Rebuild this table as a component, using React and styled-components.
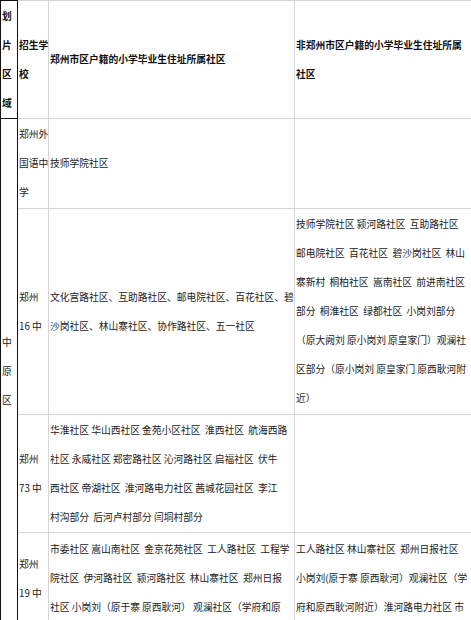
import styled, { createGlobalStyle } from 'styled-components';

const GlobalStyle = createGlobalStyle`
  html, body {
    margin: 0;
    padding: 0;
    background: #fff;
    overflow: hidden;
  }
  body {
    font-family: "Noto Sans CJK SC", "Noto Sans", sans-serif;
    color: #1a1a1a;
  }
`;

const Table = styled.table`
  border-collapse: collapse;
  table-layout: fixed;
  width: 471px;
  font-size: 9.75px;
  line-height: 29px;
`;

const Row = styled.tr`
  height: ${(props) => props.h}px;
`;

const Cell = styled.td`
  border: 1px solid #d6d6d6;
  padding: 0 0 0 1px;
  vertical-align: middle;
  overflow: hidden;
  font-weight: ${(props) => (props.head ? 700 : 400)};
  color: ${(props) => (props.head ? '#111' : '#222')};
`;

const AreaCell = styled(Cell)`
  border: 1px solid #111;
  padding-left: 1px;
`;

const Line = styled.div`
  white-space: pre;
`;

function Lines({ items }) {
  return items.map((t, i) => <Line key={i}>{t}</Line>);
}

const rows = [
  {
    h: 90,
    school: ['郑州外', '国语中', '学'],
    local: ['技师学院社区'],
    other: [],
  },
  {
    h: 206,
    school: ['郑州', '16 中'],
    local: [
      '文化宫路社区、互助路社区、邮电院社区、百花社区、碧',
      '沙岗社区、林山寨社区、协作路社区、五一社区',
    ],
    other: [
      '技师学院社区 颍河路社区  互助路社区',
      '邮电院社区  百花社区  碧沙岗社区  林山',
      '寨新村  桐柏社区  嵩南社区  前进南社区',
      '部分  桐淮社区  绿都社区  小岗刘部分',
      '（原大阙刘 原小岗刘 原皇家门）观澜社',
      '区部分（原小岗刘 原皇家门 原西耿河附',
      '近）',
    ],
  },
  {
    h: 118,
    school: ['郑州', '73 中'],
    local: [
      '华淮社区 华山西社区 金苑小区社区  淮西社区  航海西路',
      '社区 永威社区 郑密路社区 沁河路社区 启福社区  伏牛',
      '西社区 帝湖社区  淮河路电力社区 茜城花园社区  李江',
      '村沟部分  后河卢村部分 闫垌村部分',
    ],
    other: [],
  },
  {
    h: 92,
    school: ['郑州', '19 中'],
    local: [
      '市委社区 嵩山南社区  金京花苑社区  工人路社区  工程学',
      '院社区  伊河路社区  颍河路社区  林山寨社区  郑州日报',
      '社区 小岗刘（原于寨 原西耿河） 观澜社区（学府和原',
    ],
    other: [
      '工人路社区 林山寨社区  郑州日报社区',
      '小岗刘(原于寨 原西耿河）观澜社区（学',
      '府和原西耿河附近）淮河路电力社区 市',
    ],
  },
];

export default function App() {
  return (
    <>
      <GlobalStyle />
      <Table>
        <colgroup>
          <col style={{ width: 17 }} />
          <col style={{ width: 31 }} />
          <col style={{ width: 246 }} />
          <col style={{ width: 177 }} />
        </colgroup>
        <tbody>
          <Row h={118}>
            <AreaCell head>
              <Lines items={['划', '片', '区', '域']} />
            </AreaCell>
            <Cell head>
              <Lines items={['招生学', '校']} />
            </Cell>
            <Cell head>
              <Lines items={['郑州市区户籍的小学毕业生住址所属社区']} />
            </Cell>
            <Cell head>
              <Lines items={['非郑州市区户籍的小学毕业生住址所属', '社区']} />
            </Cell>
          </Row>
          {rows.map((r, i) => (
            <Row h={r.h} key={i}>
              {i === 0 && (
                <AreaCell rowSpan={rows.length}>
                  <Lines items={['中', '原', '区']} />
                </AreaCell>
              )}
              <Cell>
                <Lines items={r.school} />
              </Cell>
              <Cell>
                <Lines items={r.local} />
              </Cell>
              <Cell>
                <Lines items={r.other} />
              </Cell>
            </Row>
          ))}
        </tbody>
      </Table>
    </>
  );
}
